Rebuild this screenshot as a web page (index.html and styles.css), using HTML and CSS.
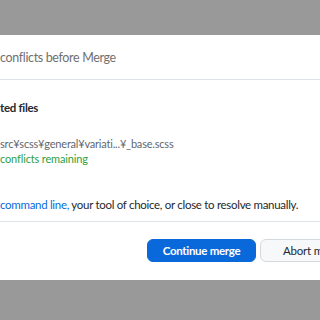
FILE: index.html
```html
<!DOCTYPE html>
<html lang="en">
<head>
  <meta charset="UTF-8" />
  <meta name="viewport" content="width=device-width, initial-scale=1.0" />
  <title>Resolve conflicts</title>
  <link rel="stylesheet" href="styles.css">
</head>
<body>
  <div class="dialog">
    <div class="dialog-header">conflicts before Merge</div>
    <div class="dialog-body">
      <h2 class="section-title">ted files</h2>
      <div class="file">
        <div class="file-path">src¥scss¥general¥variati...¥_base.scss</div>
        <div class="file-status">conflicts remaining</div>
      </div>
      <p class="hint"><a href="#">command line,</a> your tool of choice, or close to resolve manually.</p>
    </div>
    <div class="dialog-footer">
      <button class="btn btn-primary">Continue merge</button>
      <button class="btn">Abort merge</button>
    </div>
  </div>
</body>
</html>
```
FILE: styles.css
```css
body {
  margin: 0;
  background: #999;
  font-family: Lato, 'Noto Sans', sans-serif;
  font-size: 12px;
  color: #24292f;
  overflow: hidden;
}
.dialog {
  margin-top: 35px;
  background: #fff;
  height: 245px;
  display: flex;
  flex-direction: column;
  white-space: nowrap;
}
.dialog-header {
  height: 44px;
  line-height: 46px;
  font-size: 12.5px;
  letter-spacing: -0.35px;
  color: #707070;
  border-bottom: 1px solid #dde3e8;
}
.dialog-body {
  flex: 1;
  padding-top: 20px;
}
.section-title {
  margin: 0;
  font-size: 11.5px;
  font-weight: 700;
  letter-spacing: -0.3px;
  line-height: 16px;
}
.file {
  margin-top: 20px;
  line-height: 15px;
  font-size: 11px;
}
.file-path {
  color: #5f6770;
  letter-spacing: -0.2px;
}
.file-status {
  color: #2ea043;
  letter-spacing: -0.15px;
}
.hint {
  margin: 31px 0 0;
  line-height: 16px;
  font-size: 11.5px;
  letter-spacing: -0.3px;
  color: #24292f;
}
.hint a {
  color: #0969da;
  text-decoration: none;
}
.dialog-footer {
  height: 59px;
  border-top: 1px solid #dde3e8;
  display: flex;
  align-items: flex-start;
  gap: 4px;
  padding: 17px 0 0 147px;
  box-sizing: border-box;
}
.btn {
  flex-shrink: 0;
  height: 23px;
  padding: 0 22px;
  border: 1px solid #d4d9de;
  border-radius: 6px;
  background: #f6f8fa;
  color: #24292f;
  font-family: inherit;
  font-size: 11.5px;
  letter-spacing: -0.2px;
}
.btn-primary {
  width: 109px;
  padding: 0;
  border-color: #0969da;
  background: #0969da;
  color: #fff;
  font-weight: 700;
  letter-spacing: -0.3px;
}
```
